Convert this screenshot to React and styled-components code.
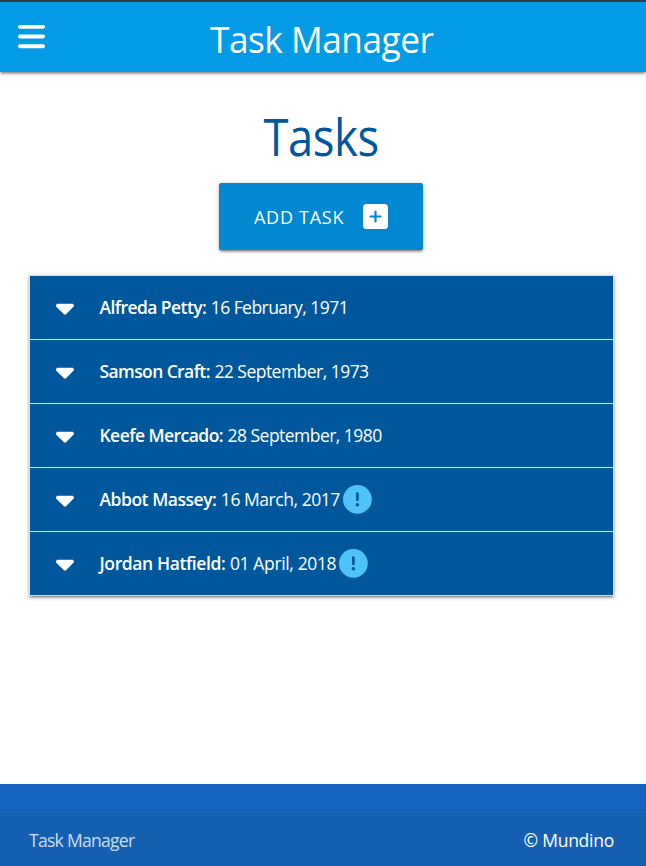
import React from "react";
import styled, { createGlobalStyle } from "styled-components";
import { FaBars, FaCaretDown, FaCircleExclamation } from "react-icons/fa6";

const GlobalStyle = createGlobalStyle`
  *, *::before, *::after { box-sizing: border-box; }
  html, body { margin: 0; height: 100%; overflow: hidden; }
  body {
    background: #fff;
    font-family: "Segoe UI", "Open Sans", "Noto Sans", sans-serif;
    font-size: 17.5px;
    line-height: 1.5;
  }
  svg { display: block; flex: none; }
`;

const elevation = `0 2px 2px 0 rgba(0, 0, 0, 0.2), 0 3px 1px -2px rgba(0, 0, 0, 0.16),
    0 1px 5px 0 rgba(0, 0, 0, 0.22)`;

const Page = styled.div`
  display: flex;
  flex-direction: column;
  height: 100vh;
  border-top: 2px solid #3b4045;
`;

const NavBar = styled.nav`
  display: grid;
  grid-template-columns: 60px 1fr 60px;
  align-items: center;
  flex: none;
  height: 70px;
  color: #fff;
  background: #039be5;
  box-shadow: ${elevation};
`;

const MenuButton = styled.button`
  display: flex;
  padding: 0 0 1px 16px;
  border: 0;
  color: inherit;
  background: none;
  font-size: 31px;
`;

const Brand = styled.a`
  justify-self: center;
  margin: 4px 3px 0 0;
  font-size: 36.5px;
  line-height: 1;
  letter-spacing: -0.5px;
  white-space: nowrap;
  transform: scaleX(0.965);
`;

const Main = styled.main`
  display: flex;
  flex-direction: column;
  align-items: center;
  flex: 1;
  padding: 34px 33px 0 30px;
`;

const Heading = styled.h1`
  margin: 0;
  height: 77px;
  padding: 0;
  color: #01579b;
  font-size: 50.5px;
  font-weight: 400;
  line-height: 61px;
  letter-spacing: -0.5px;
  transform: scaleX(0.9);
`;

const AddButton = styled.button`
  display: flex;
  align-items: center;
  width: 204px;
  height: 67px;
  margin-right: 1px;
  padding: 0 0 0 35px;
  gap: 18px;
  border: 0;
  border-radius: 2px;
  color: #fff;
  background: #0288d1;
  font: inherit;
  text-align: left;
  white-space: nowrap;
  box-shadow: ${elevation};
`;

const ButtonLabel = styled.span`
  width: 91px;
  padding-top: 1px;
  font-size: 18px;
  letter-spacing: 0.72px;
  text-transform: uppercase;
`;

const PlusIcon = styled.svg`
  width: 25px;
  height: 25px;
`;

const TaskList = styled.ul`
  align-self: stretch;
  margin: 25px -1px 0;
  padding: 0;
  border: 1px solid #ddd;
  list-style: none;
  box-shadow: ${elevation};
`;

const TaskRow = styled.li`
  display: flex;
  align-items: center;
  height: 64px;
  padding-left: 25.5px;
  border-bottom: 1px solid #ddd;
  color: #fff;
  background: #01579b;
  white-space: nowrap;
  &:last-child { height: 63px; border-bottom: 0; }
`;

const Caret = styled(FaCaretDown)`
  width: 18px;
  height: 28.8px;
  margin: 0 26px 0 0;
`;

const Person = styled.span`
  font-weight: 600;
  letter-spacing: ${({ $tracking }) => $tracking}px;
`;

const DueDate = styled.span`
  margin-left: 4.5px;
  letter-spacing: ${({ $tracking }) => $tracking}px;
`;

const Overdue = styled(FaCircleExclamation)`
  width: 28.8px;
  height: 28.8px;
  margin-left: 3px;
  color: #4fc3f7;
`;

const Footer = styled.footer`
  flex: none;
  height: 82px;
  padding-top: 25px;
  background: #1565c0;
`;

const FooterBar = styled.div`
  display: flex;
  align-items: center;
  justify-content: space-between;
  height: 57px;
  padding: 6px 32px 0 29px;
  color: rgba(255, 255, 255, 0.8);
  background-color: rgba(25, 85, 145, 0.3);
  letter-spacing: -0.7px;
`;

const Copyright = styled.span`
  color: #fff;
  letter-spacing: -0.25px;
`;

const tasks = [
  { name: "Alfreda Petty:", date: "16 February, 1971", nameTracking: -0.58, dateTracking: -0.55 },
  { name: "Samson Craft:", date: "22 September, 1973", nameTracking: -0.6, dateTracking: -0.53 },
  { name: "Keefe Mercado:", date: "28 September, 1980", nameTracking: -0.55, dateTracking: -0.53 },
  { name: "Abbot Massey:", date: "16 March, 2017", nameTracking: -0.48, dateTracking: -0.45, overdue: true },
  { name: "Jordan Hatfield:", date: "01 April, 2018", nameTracking: -0.4, dateTracking: -0.36, overdue: true },
];

export default function App() {
  return (
    <>
      <GlobalStyle />
      <Page>
        <NavBar>
          <MenuButton aria-label="Menu"><FaBars /></MenuButton>
          <Brand>Task Manager</Brand>
        </NavBar>
        <Main>
          <Heading>Tasks</Heading>
          <AddButton>
            <ButtonLabel>Add Task</ButtonLabel>
            <PlusIcon viewBox="0 0 25 25" aria-hidden="true">
              <rect width="25" height="25" rx="3.6" fill="#fff" />
              <path d="M12.5 7.5v10M7.5 12.5h10" stroke="#0288d1" strokeWidth="2.2" strokeLinecap="round" />
            </PlusIcon>
          </AddButton>
          <TaskList>
            {tasks.map((task) => (
              <TaskRow key={task.name}>
                <Caret />
                <Person $tracking={task.nameTracking}>{task.name}</Person>
                <DueDate $tracking={task.dateTracking}>{task.date}</DueDate>
                {task.overdue && <Overdue />}
              </TaskRow>
            ))}
          </TaskList>
        </Main>
        <Footer>
          <FooterBar>
            <span>Task Manager</span>
            <Copyright>© Mundino</Copyright>
          </FooterBar>
        </Footer>
      </Page>
    </>
  );
}
